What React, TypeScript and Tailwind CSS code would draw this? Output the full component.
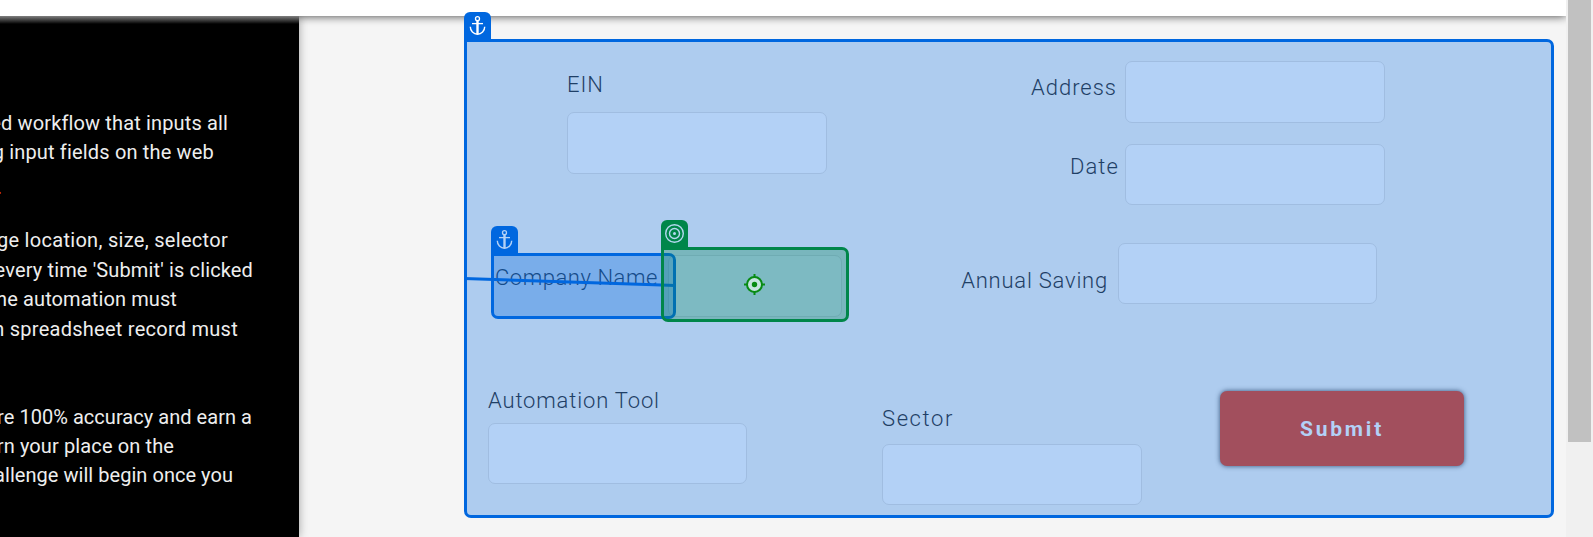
import type { ReactNode } from 'react';

const LABEL =
  "whitespace-pre font-['Roboto',sans-serif] text-[22px] leading-8 font-light text-[#1f3f66]";
const INPUT = 'block shrink-0 rounded-[7px] border border-[#a0bde1] bg-[#b3d1f6] outline-none';

function Field({ label, children, className, textClass }: {
  label: string; children?: ReactNode; className: string; textClass: string;
}) {
  return (
    <div className={className}>
      <label className={`${LABEL} ${textClass}`}>{label}</label>
      {children}
    </div>
  );
}

function AnchorTab({ color }: { color: string }) {
  return (
    <div className={`absolute -top-[30px] -left-[3px] h-[30px] w-[27px] rounded-t-[6px] bg-[#0067df] ${color}`}>
      <svg width="27" height="30" viewBox="0 0 27 30" fill="none" stroke="currentColor">
        <circle cx="13.5" cy="6.700" r="2" strokeWidth="1.3" />
        <path d="M13.5 8.700v13.500" strokeWidth="2.400" />
        <path d="M8 11.600h11" strokeWidth="1.3" />
        <path d="M6.300 14.800A7.200 7.400 0 0 0 20.700 14.800" strokeWidth="1.4" />
      </svg>
    </div>
  );
}

const LINES = [
  { text: 'ed workflow that inputs all', cls: 'w-[228px] tracking-[0.14px] h-[29px]' },
  { text: 'g input fields on the web', cls: 'w-[214px] tracking-[0.17px] h-[29px]' },
  { text: '.', cls: 'w-[2px] text-[#fb6a2c] h-[59px] pt-[6px]' },
  { text: 'ge location, size, selector', cls: 'w-[228px] tracking-[0.3px] h-[30px]' },
  { text: "every time 'Submit' is clicked", cls: 'w-[253px] tracking-[0.14px] h-[29px]' },
  { text: 'he automation must', cls: 'w-[177px] tracking-[0.11px] h-[30px]' },
  { text: 'h spreadsheet record must', cls: 'w-[238px] tracking-[0.26px] h-[88px]' },
  { text: 're 100% accuracy and earn a', cls: 'w-[252px] tracking-[0.04px] h-[29px]' },
  { text: 'rn your place on the', cls: 'w-[174px] tracking-[0.12px] h-[29px]' },
  { text: 'allenge will begin once you', cls: 'w-[233px] tracking-[0.04px] h-[29px]' },
];

export default function App() {
  return (
    <div className="flex h-[537px] w-[1593px] overflow-hidden bg-[#f5f5f5]">
      <div className="flex w-[1566px] flex-col overflow-hidden">
        <header className="relative z-10 h-4 shrink-0 bg-white shadow-[0_0_10px_rgba(0,0,0,0.75)]">
          <div className="absolute inset-x-0 top-full h-[10px] bg-linear-to-b from-white/50 to-transparent to-80% w-[299px]" />
        </header>
        <div className="flex h-[521px]">
          <aside className="w-[299px] shrink-0 overflow-hidden bg-black pt-[92px] font-['Roboto',sans-serif] text-[20px] leading-[30px] text-[#eeeeee] shadow-[0_0_9px_rgba(0,0,0,0.35)]">
            {LINES.map((l) => (
              <p key={l.text} className={`flex justify-end whitespace-pre ${l.cls}`}>
                {l.text}
              </p>
            ))}
          </aside>

          <main className="relative z-20 mt-[23px] ml-[165px] flex h-[479px] w-[1090px] flex-col rounded-[7px] rounded-tl-none border-[3px] border-[#0067df] bg-[#aeccef]">
            <AnchorTab color="text-white" />

            <div className="flex h-[338px]">
              <div className="w-[400px] shrink-0">
                <Field label="EIN" className="mt-[27px] ml-[100px] flex flex-col gap-[11px]" textClass="tracking-[0.95px]">
                  <input className={`${INPUT} h-[62px] w-[260px]`} />
                </Field>
                <div className="relative mt-[76px] ml-[24px] h-[76px]">
                  <Field label="Company Name" className="flex pt-[5px]" textClass="w-[177px] pl-1 pt-[7px] tracking-[0.55px]">
                    <input className={`${INPUT} h-[62px] w-[174px]`} />
                  </Field>
                  <div className="absolute top-[3px] left-0 h-[66px] w-[185px] rounded-[7px] rounded-tl-none border-[3px] border-[#0067df] bg-[#0067df]/30">
                    <AnchorTab color="text-[#b3d1f6]" />
                  </div>
                  <svg className="absolute top-0 -left-[27px]" width="213" height="76" viewBox="0 0 213 76" fill="none">
                    <path d="M0 28.500 190 34.700 211 35.500" stroke="#0067df" strokeWidth="3" />
                  </svg>
                  <div className="absolute -top-[3px] left-[170px] flex h-[75px] w-[188px] items-center justify-center rounded-[7px] rounded-tl-none border-[3px] border-[#00864a] bg-[#00864a]/30">
                    <div className="absolute -top-[30px] -left-[3px] h-[30px] w-[27px] rounded-t-[6px] bg-[#00864a]">
                      <svg width="27" height="30" viewBox="0 0 27 30" fill="none" stroke="#b3d8f0" strokeWidth="1.4">
                        <circle cx="13.500" cy="13.500" r="8.800" />
                        <circle cx="13.500" cy="13.500" r="5" />
                        <circle cx="13.500" cy="13.500" r="1.500" fill="#b3d8f0" stroke="none" />
                      </svg>
                    </div>
                    <svg className="mr-px mb-px" width="21" height="21" viewBox="0 0 21 21" fill="none" stroke="#078b12" strokeWidth="2">
                      <circle cx="10.500" cy="10.500" r="7.500" fill="#c4e4df" />
                      <circle cx="10.500" cy="10.500" r="2.700" fill="#078b12" stroke="none" />
                      <path d="M10.500 0v3M10.500 18v3M0 10.500h3M18 10.500h3" />
                    </svg>
                  </div>
                </div>
              </div>

              <div className="flex w-[518px] flex-col items-end pt-[19px]">
                <Field label="Address" className="flex gap-[8px]" textClass="pt-[11px] tracking-[0.98px]">
                  <input className={`${INPUT} h-[62px] w-[260px]`} />
                </Field>
                <Field label="Date" className="mt-[21px] flex gap-[6px]" textClass="pt-[7px] tracking-[1.1px]">
                  <input className={`${INPUT} h-[61px] w-[260px]`} />
                </Field>
                <Field label="Annual Saving" className="mt-[38px] mr-[8px] flex gap-[10px]" textClass="pt-[22px] tracking-[0.78px]">
                  <input className={`${INPUT} h-[61px] w-[259px]`} />
                </Field>
              </div>
            </div>

            <div className="flex pl-[21px]">
              <Field label="Automation Tool" className="mt-[5px] flex w-[394px] flex-col gap-[6px]" textClass="tracking-[0.84px]">
                <input className={`${INPUT} h-[61px] w-[259px]`} />
              </Field>
              <Field label="Sector" className="mt-[23px] flex w-[338px] flex-col gap-[9px]" textClass="tracking-[1.6px]">
                <input className={`${INPUT} h-[61px] w-[260px]`} />
              </Field>
              <button className="mt-[11px] h-[75px] w-[244px] rounded-[7px] bg-[#a24f5d] pt-[2px] font-['Roboto',sans-serif] text-[21px] font-bold tracking-[2.8px] text-[#b3d1f6] shadow-[0_0_5px_rgba(20,50,90,0.8)]">
                Submit
              </button>
            </div>
          </main>
        </div>
      </div>

      <div className="flex w-[27px] shrink-0 justify-center bg-[#f0f0f0]">
        <div className="h-[442px] w-[23px] bg-[#c1c1c1]" />
      </div>
    </div>
  );
}
